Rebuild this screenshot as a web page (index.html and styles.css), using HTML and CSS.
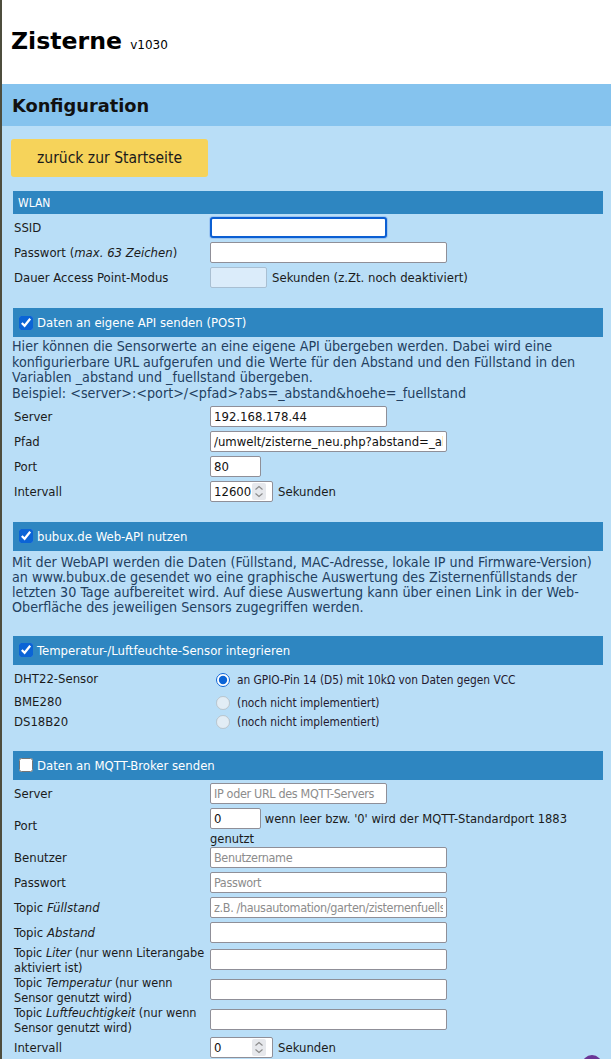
FILE: index.html
```html
<!DOCTYPE html>
<html lang="de">
<head>
<meta charset="utf-8">
<title>Zisterne – Konfiguration</title>
<link rel="stylesheet" href="styles.css">
</head>
<body>
<header class="top">
  <h1 class="title">Zisterne <span class="ver">v1030</span></h1>
</header>
<div class="bar"><h2 class="bar-title">Konfiguration</h2></div>
<main class="content">
  <button class="back" type="button">zurück zur Startseite</button>

  <section class="sec">
    <div class="sec-head plain">WLAN</div>
    <div class="rows">
      <label class="lbl">SSID</label>
      <div class="cell"><input class="inp w177 focused" type="text"></div>
      <label class="lbl">Passwort (<i>max. 63 Zeichen</i>)</label>
      <div class="cell"><input class="inp w237" type="password"></div>
      <label class="lbl">Dauer Access Point-Modus</label>
      <div class="cell"><input class="inp w57 disabled" type="text" disabled><span class="after">Sekunden (z.Zt. noch deaktiviert)</span></div>
    </div>
  </section>

  <section class="sec">
    <div class="sec-head"><input type="checkbox" class="chk" checked><span>Daten an eigene API senden (POST)</span></div>
    <p class="desc">Hier können die Sensorwerte an eine eigene API übergeben werden. Dabei wird eine<br>konfigurierbare URL aufgerufen und die Werte für den Abstand und den Füllstand in den<br>Variablen _abstand und _fuellstand übergeben.<br>Beispiel: &lt;server&gt;:&lt;port&gt;/&lt;pfad&gt;?abs=_abstand&amp;hoehe=_fuellstand</p>
    <div class="rows">
      <label class="lbl">Server</label>
      <div class="cell"><input class="inp w177" type="text" value="192.168.178.44"></div>
      <label class="lbl">Pfad</label>
      <div class="cell"><input class="inp w237" type="text" value="/umwelt/zisterne_neu.php?abstand=_abstand&amp;fuellstand=_fuellstand"></div>
      <label class="lbl">Port</label>
      <div class="cell"><input class="inp w51" type="text" value="80"></div>
      <label class="lbl">Intervall</label>
      <div class="cell">
        <span class="numbox w63"><input class="num" type="text" value="12600"><span class="spin"><svg viewBox="0 0 14 17" width="14" height="17"><path d="M3.5 6.5 L7 3.5 L10.5 6.5 M3.5 10.5 L7 13.5 L10.5 10.5" fill="none" stroke="#8a8a8a" stroke-width="1.1"/></svg></span></span><span class="after">Sekunden</span>
      </div>
    </div>
  </section>

  <section class="sec">
    <div class="sec-head"><input type="checkbox" class="chk" checked><span>bubux.de Web-API nutzen</span></div>
    <p class="desc desc2">Mit der WebAPI werden die Daten (Füllstand, MAC-Adresse, lokale IP und Firmware-Version)<br>an www.bubux.de gesendet wo eine graphische Auswertung des Zisternenfüllstands der<br>letzten 30 Tage aufbereitet wird. Auf diese Auswertung kann über einen Link in der Web-<br>Oberfläche des jeweiligen Sensors zugegriffen werden.</p>
  </section>

  <section class="sec">
    <div class="sec-head"><input type="checkbox" class="chk" checked><span>Temperatur-/Luftfeuchte-Sensor integrieren</span></div>
    <div class="rows radios">
      <label class="lbl r1">DHT22-Sensor</label>
      <div class="cell rc r1"><input type="radio" class="rad" name="s" checked><span>an GPIO-Pin 14 (D5) mit 10kΩ von Daten gegen VCC</span></div>
      <label class="lbl r2">BME280</label>
      <div class="cell rc r2"><input type="radio" class="rad" name="s2" disabled><span>(noch nicht implementiert)</span></div>
      <label class="lbl r3">DS18B20</label>
      <div class="cell rc r3"><input type="radio" class="rad" name="s3" disabled><span>(noch nicht implementiert)</span></div>
    </div>
  </section>

  <section class="sec">
    <div class="sec-head"><input type="checkbox" class="chk"><span>Daten an MQTT-Broker senden</span></div>
    <div class="rows">
      <label class="lbl">Server</label>
      <div class="cell"><input class="inp w177" type="text" placeholder="IP oder URL des MQTT-Servers"></div>
      <label class="lbl">Port</label>
      <div class="cell wrap"><input class="inp w51" type="text" value="0"> <span class="note">wenn leer bzw. '0' wird der MQTT-Standardport 1883 genutzt</span></div>
      <label class="lbl">Benutzer</label>
      <div class="cell"><input class="inp w237" type="text" placeholder="Benutzername"></div>
      <label class="lbl">Passwort</label>
      <div class="cell"><input class="inp w237" type="text" placeholder="Passwort"></div>
      <label class="lbl">Topic <i>Füllstand</i></label>
      <div class="cell"><input class="inp w237" type="text" placeholder="z.B. /hausautomation/garten/zisternenfuellstand"></div>
      <label class="lbl">Topic <i>Abstand</i></label>
      <div class="cell"><input class="inp w237" type="text"></div>
      <label class="lbl two">Topic <i>Liter</i> (nur wenn Literangabe<br>aktiviert ist)</label>
      <div class="cell"><input class="inp w237" type="text"></div>
      <label class="lbl two">Topic <i>Temperatur</i> (nur wenn<br>Sensor genutzt wird)</label>
      <div class="cell"><input class="inp w237" type="text"></div>
      <label class="lbl two">Topic <i>Luftfeuchtigkeit</i> (nur wenn<br>Sensor genutzt wird)</label>
      <div class="cell"><input class="inp w237" type="text"></div>
      <label class="lbl">Intervall</label>
      <div class="cell">
        <span class="numbox w63"><input class="num" type="text" value="0"><span class="spin"><svg viewBox="0 0 14 17" width="14" height="17"><path d="M3.5 6.5 L7 3.5 L10.5 6.5 M3.5 10.5 L7 13.5 L10.5 10.5" fill="none" stroke="#8a8a8a" stroke-width="1.1"/></svg></span></span><span class="after">Sekunden</span>
      </div>
    </div>
  </section>
</main>
<span class="fab"></span>
</body>
</html>
```

FILE: styles.css
```css
* { box-sizing: border-box; }

html, body { height: 100%; }

body {
  margin: 0;
  border-left: 2px solid #4d4d3e;
  background: #b9def7;
  font-family: "DejaVu Sans Condensed", "DejaVu Sans", sans-serif;
  font-size: 13px;
  color: #1b1b1b;
  overflow: hidden;
  position: relative;
}

.top {
  background: #ffffff;
  height: 84px;
  padding: 27px 0 0 9px;
}

.title {
  margin: 0;
  font-family: "DejaVu Sans", sans-serif;
  font-weight: bold;
  font-size: 23.6px;
  line-height: 28px;
  color: #000;
}

.ver {
  font-weight: normal;
  font-size: 12px;
}

.bar {
  background: #85c3ee;
  height: 42px;
  padding: 2px 0 0 10px;
}

.bar-title {
  margin: 0;
  font-family: "DejaVu Sans", sans-serif;
  font-weight: bold;
  font-size: 17.8px;
  line-height: 40px;
  color: #111;
}

.content {
  padding: 13px 8px 0 9px;
}

.back {
  display: block;
  width: 197px;
  height: 38px;
  border: 0;
  border-radius: 3px;
  background: #f6d35a;
  color: #1a1a1a;
  font-family: "DejaVu Sans Condensed", "DejaVu Sans", sans-serif;
  font-size: 15.5px;
  padding: 0;
  margin: 0 0 14px 0;
}

.sec {
  margin: 0 0 18px 2px;
}

.sec-head {
  background: #2e86c1;
  color: #fff;
  height: 29px;
  display: flex;
  align-items: center;
  padding: 0 0 0 6px;
  font-size: 13px;
}

.sec-head.plain {
  height: 23px;
  padding-left: 5px;
  font-size: 12px;
}

.chk {
  width: 14px;
  height: 14px;
  margin: 0 4px 0 0;
  accent-color: #0b64d6;
}

.desc {
  margin: 2px 0 1px -1px;
  font-size: 14.2px;
  line-height: 15.7px;
  color: #233f5f;
  white-space: nowrap;
}

.desc2 {
  margin-top: 4px;
  margin-bottom: 0;
  padding-bottom: 3px;
  line-height: 15px;
}

.rows {
  display: grid;
  grid-template-columns: 197px 1fr;
  align-items: center;
  padding-top: 1px;
}

.lbl {
  padding-left: 1px;
  line-height: 15px;
  color: #1b1b1b;
}

.lbl.two {
  white-space: nowrap;
  font-size: 12.6px;
}

.cell {
  display: flex;
  align-items: center;
  min-height: 25px;
}

.cell.wrap {
  display: block;
  padding: 0;
  line-height: 13px;
}

.cell.wrap .inp {
  vertical-align: middle;
}

.note {
  vertical-align: middle;
  font-size: 12.8px;
  line-height: 13px;
}

.inp {
  height: 21px;
  margin: 2px 0;
  border: 1px solid #8f8f98;
  border-radius: 2px;
  background: #fff;
  font-family: "DejaVu Sans Condensed", "DejaVu Sans", sans-serif;
  font-size: 13px;
  color: #111;
  padding: 0 3px;
}

.inp::placeholder {
  color: #8c8c8c;
  font-family: "DejaVu Sans Condensed", sans-serif;
  font-size: 12.5px;
  letter-spacing: -0.35px;
}

.inp.focused {
  border: 2px solid #0b5fd3;
  box-shadow: 0 0 0 1px #9cc6f2;
  border-radius: 3px;
  outline: none;
}

.inp.disabled {
  background: #dbecfa;
  border-color: #a9bfd2;
}

.w177 { width: 177px; }
.w237 { width: 237px; }
.w57 { width: 57px; }
.w51 { width: 51px; }
.w63 { width: 63px; }

.after {
  margin-left: 5px;
}

.numbox {
  display: inline-flex;
  align-items: center;
  height: 21px;
  margin: 2px 0;
  border: 1px solid #8f8f98;
  border-radius: 2px;
  background: #fff;
  padding: 0 3px 0 3px;
}

.num {
  border: 0;
  padding: 0;
  margin: 0;
  width: 38px;
  font-family: "DejaVu Sans Condensed", "DejaVu Sans", sans-serif;
  font-size: 13px;
  color: #111;
  background: transparent;
}

.spin {
  display: block;
  width: 14px;
  height: 17px;
  background: #e6e8ec;
  border-radius: 2px;
}

.spin svg { display: block; }

.radios .lbl {
  align-self: start;
}

.radios .rc {
  min-height: 0;
  align-items: flex-start;
}

.radios .r1 { height: 25px; padding-top: 5px; }
.radios .r2 { height: 21px; padding-top: 3px; }
.radios .r3 { height: 21px; padding-top: 2px; }
.radios .rc.r1 { padding-top: 7px; }
.radios .rc.r2 { padding-top: 5px; }
.radios .rc.r3 { padding-top: 3px; }

.rad {
  width: 14px;
  height: 14px;
  margin: 0 7px 0 6px;
  accent-color: #0b64d6;
}

.rc span {
  font-size: 11.8px;
  line-height: 15px;
  color: #24192e;
}

.fab {
  position: absolute;
  left: 580px;
  top: 1055px;
  width: 20px;
  height: 20px;
  border-radius: 50%;
  background: #6a3596;
}
```
